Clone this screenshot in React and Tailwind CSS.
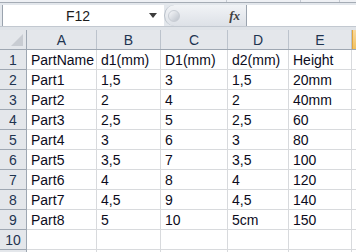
import React from 'react';

const cols = [
  { name: 'A', w: 'w-[70px]' },
  { name: 'B', w: 'w-[64px]' },
  { name: 'C', w: 'w-[67px]' },
  { name: 'D', w: 'w-[61px]' },
  { name: 'E', w: 'w-[63px]' },
];

const rows = [
  ['PartName', 'd1(mm)', 'D1(mm)', 'd2(mm)', 'Height'],
  ['Part1', '1,5', '3', '1,5', '20mm'],
  ['Part2', '2', '4', '2', '40mm'],
  ['Part3', '2,5', '5', '2,5', '60'],
  ['Part4', '3', '6', '3', '80'],
  ['Part5', '3,5', '7', '3,5', '100'],
  ['Part6', '4', '8', '4', '120'],
  ['Part7', '4,5', '9', '4,5', '140'],
  ['Part8', '5', '10', '5cm', '150'],
  ['', '', '', '', ''],
  ['', '', '', '', ''],
];

const App = () => {
  return (
    <div className="w-[356px] h-[252px] overflow-hidden bg-white font-['Liberation_Sans',Arial,sans-serif] text-[13px] leading-none">
      {/* Ribbon bottom edge */}
      <div className="flex h-[3px] bg-[#eef0f4] border-b border-[#a5acb5]">
        <div className="w-[227px] border-r border-[#c5cad2]"></div>
        <div className="w-[74px] border-r border-[#c5cad2]"></div>
        <div className="w-[39px] border-r border-[#c5cad2]"></div>
      </div>

      {/* Name box + formula bar */}
      <div className="flex h-[24px] bg-[#e3e7ec] pt-[2px] border-b border-[#c2c8d0]">
        <div className="flex items-center w-[162px] h-[21px] ml-[2px] bg-white border-l border-[#9aa3ae]">
          <span className="flex-1 text-center text-[14px] text-[#1b1b1b] pl-[4px]">F12</span>
          <svg width="8" height="5" viewBox="0 0 8 5" className="mr-[7px]">
            <path d="M0 0H8L4 5Z" fill="#3c3c3c" />
          </svg>
        </div>
        <div className="flex items-center w-[82px] h-[21px] bg-gradient-to-b from-[#f1f3f6] to-[#dde1e7] rounded-l-[11px] border-l border-[#b9c0c9]">
          <div className="ml-[3px] w-[12px] h-[12px] rounded-full bg-gradient-to-br from-[#f7f8fa] to-[#bcc2cb] border border-[#c8cdd4]"></div>
          <span className="ml-auto mr-[6px] text-[13px] italic font-bold text-[#404040] font-['Liberation_Serif',serif]">fx</span>
        </div>
        <div className="flex-1 h-[21px] bg-white border-l border-[#9aa3ae]"></div>
      </div>

      {/* gap strip */}
      <div className="h-[3px] bg-[#dfe3e8]"></div>

      {/* Column headers */}
      <div className="flex h-[20px] bg-[#e4e7eb] border-b border-[#9ea7b2] text-[#1e3450] text-[14px]">
        <div className="relative w-[27px] border-r border-[#9ea7b2]">
          <div className="absolute right-[3px] bottom-[3px] w-0 h-0 border-l-[12px] border-l-transparent border-b-[12px] border-b-[#c8ccd2]"></div>
        </div>
        {cols.map((c) => (
          <div key={c.name} className={`${c.w} flex items-center justify-center border-r border-[#bcc3cc]`}>
            {c.name}
          </div>
        ))}
        <div className="flex-1 bg-gradient-to-b from-[#f9d99f] to-[#f1c15f] border-l border-[#e3a73c]"></div>
      </div>

      {/* Grid rows */}
      {rows.map((r, i) => (
        <div key={i} className="flex h-[20px]">
          <div className="w-[27px] flex items-center justify-center bg-[#e4e7eb] border-r border-b border-[#9ea7b2] text-[#1e3450] text-[14px]">
            {i < 10 ? i + 1 : ''}
          </div>
          {r.map((v, j) => (
            <div
              key={j}
              className={`${cols[j].w} flex items-center pl-[4px] border-r border-b border-[#d8dadd] text-[#0c0c1c] text-[14px] whitespace-nowrap overflow-hidden`}
            >
              {v}
            </div>
          ))}
          <div className="flex-1 border-b border-[#d8dadd]"></div>
        </div>
      ))}
    </div>
  );
};

export default App;
